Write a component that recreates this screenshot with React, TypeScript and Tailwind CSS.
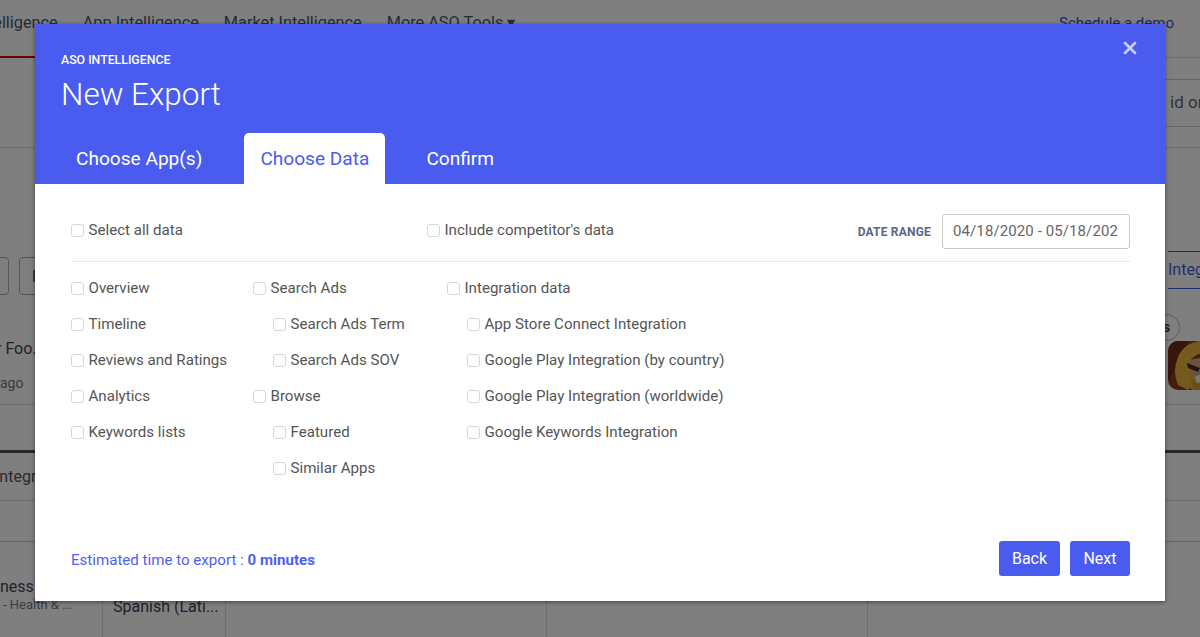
import { X } from "lucide-react";

const font = { fontFamily: "Roboto, sans-serif" };

function Check({ label, nested }: { label: string; nested?: boolean }) {
  return (
    <label className={`flex h-[36px] items-center whitespace-nowrap text-[15.1px] text-[#555] ${nested ? "pl-[20px]" : ""}`}>
      <span className="mr-[4.5px] h-[13px] w-[13px] shrink-0 rounded-[3px] border border-[#d6d6d6] bg-white" />
      {label}
    </label>
  );
}

function ClashIcon() {
  return (
    <svg viewBox="0 0 49 49" className="h-full w-full">
      <rect width="49" height="49" fill="#8a3a1e" />
      <path d="M0 0 H20 L6 30 L0 40 Z" fill="#6d2b18" />
      <path d="M14 24 Q26 14 49 18 L49 49 L24 49 Q14 40 14 24 Z" fill="#d8a184" />
      <path d="M10 44 Q4 30 10 16 Q16 2 32 0 L49 0 L49 14 Q30 8 22 20 Q22 32 30 40 L20 49 Z" fill="#e8b53a" />
      <path d="M19 22 L32 27 L30 31 L20 27 Z" fill="#4a2a1c" />
      <path d="M27 36 Q36 30 49 34 L49 42 Q36 40 29 42 Z" fill="#f3eee2" />
      <path d="M22 36 L32 44 L49 46 L49 49 L26 49 Z" fill="#d99f2e" />
    </svg>
  );
}

function BackgroundPage() {
  return (
    <div className="flex h-[637px] w-[1200px] flex-col overflow-hidden bg-white text-[16px] text-[#445]">
      <div className="flex h-[58px] shrink-0 border-b border-[#ddd]">
        <div className="flex h-[58px] flex-1 -translate-x-[61px] gap-[25px] pt-[11px] text-[16.3px] text-[#4a5a70]">
          <span className="h-[47px] border-b-2 border-[#d0021b]">ASO Intelligence</span>
          <span>App Intelligence</span>
          <span>Market Intelligence</span>
          <span>More ASO Tools ▾</span>
        </div>
        <span className="pr-[26px] pt-[12px] text-[15px] text-[#3f4fc0]">Schedule a demo</span>
      </div>
      <div className="flex h-[90px] shrink-0 items-center justify-end border-b border-[#ddd] text-[#666]">
        <div className="flex h-[48px] w-[60px] items-center overflow-hidden whitespace-nowrap border-y border-[#ccc] pl-[30px] text-[17px]">id or</div>
      </div>
      <div className="flex h-[257px] shrink-0 flex-col border-b border-[#ddd]">
        <div className="flex h-[147px] justify-between">
          <div className="flex gap-[10px] pt-[109px]">
            <div className="-ml-[10px] h-[38px] w-[19px] rounded border border-[#aaa]" />
            <div className="h-[38px] w-[40px] rounded border border-[#aaa] pl-[12px] pt-[7px]">F</div>
          </div>
          <div className="pt-[103px]">
            <div className="flex h-[38px] w-[32px] items-center overflow-hidden border-y border-[#4a5ae0] text-[#4a5ae0]">Integ</div>
          </div>
        </div>
        <div className="flex flex-1 justify-between">
          <div className="pt-[42px] leading-[24px]">
            <div className="-ml-[4px] whitespace-nowrap">r Foo.</div>
            <div className="pt-[10px] text-[14px] text-[#777]">ago</div>
          </div>
          <div className="w-[47px] overflow-hidden pt-[19px]">
            <div className="flex h-[27px] w-[27px] items-center justify-center rounded-full border border-[#bbb] text-[14px] font-bold">s</div>
            <div className="ml-[15px] h-[49px] w-[49px] overflow-hidden rounded-[10px]">
              <ClashIcon />
            </div>
          </div>
        </div>
      </div>
      <div className="flex h-[48px] shrink-0 border-b-[3px] border-[#555]" />
      <div className="flex h-[48px] shrink-0 items-center border-b border-[#ddd] text-[#555]">
        <span className="-ml-[5px]">Integr</span>
      </div>
      <div className="h-[41px] shrink-0 border-b border-[#c5cde0]" />
      <div className="flex flex-1">
        <div className="w-[103px] border-r border-[#ddd] pt-[35px]">
          <div className="leading-[20px]">ness</div>
          <div className="pl-[3px] text-[13px] leading-[16px] text-[#777]">- Health &amp; ...</div>
        </div>
        <div className="w-[123px] whitespace-nowrap border-r border-[#ddd] pl-[10px] pt-[53px] leading-[24px]">Spanish (Lati...</div>
        <div className="w-[321px] border-r border-[#ddd]" />
        <div className="w-[321px] border-r border-[#ddd]" />
      </div>
    </div>
  );
}

export default function App() {
  return (
    <div className="relative h-[637px] w-[1200px] overflow-hidden" style={font}>
      <BackgroundPage />

      <div className="absolute inset-0 bg-black/50" />

      <div className="absolute left-[35px] top-[24px] flex h-[577px] w-[1130px] flex-col bg-white shadow-[0_1px_4px_rgba(0,0,0,0.5)]">
        <div className="relative flex h-[160px] shrink-0 flex-col bg-[#4a5cf0] text-white">
          <div className="pl-[26px] pt-[29px] text-[12.3px] font-medium leading-[14px]">ASO INTELLIGENCE</div>
          <div className="pl-[26px] pt-[4px] text-[31.5px] font-light leading-[48px]">New Export</div>
          <button className="absolute right-[25px] top-[14px] text-[#c9cdfa]">
            <X size={20} strokeWidth={3.2} />
          </button>
          <div className="mt-auto flex gap-[25px] pl-[25px] text-[19.1px] leading-[51px]">
            <div className="px-[16px]">Choose App(s)</div>
            <div className="ml-[1px] rounded-t-[5px] bg-white px-[16px] text-[#4a5cf0]">Choose Data</div>
            <div className="px-[16px]">Confirm</div>
          </div>
        </div>

        <div className="flex flex-1 flex-col pl-[36px] pr-[35px]">
          <div className="flex h-[78px] shrink-0 items-start border-b border-[#e8e8e8] pt-[28px]">
            <div className="w-[356px]">
              <Check label="Select all data" />
            </div>
            <Check label="Include competitor's data" />
            <div className="ml-auto flex items-center pt-[2px]">
              <span className="mr-[11px] text-[12px] font-bold tracking-[0.2px] text-[#5b6785]">DATE RANGE</span>
              <div className="h-[35px] w-[188px] rounded-[3px] border border-[#ccc] px-[10px] text-[15px] leading-[33px] tracking-[0.1px] text-[#666]">
                <div className="w-[165px] overflow-hidden whitespace-nowrap">04/18/2020 - 05/18/2020</div>
              </div>
            </div>
          </div>

          <div className="flex pt-[8px]">
            <div className="w-[182px]">
              <Check label="Overview" />
              <Check label="Timeline" />
              <Check label="Reviews and Ratings" />
              <Check label="Analytics" />
              <Check label="Keywords lists" />
            </div>
            <div className="w-[194px]">
              <Check label="Search Ads" />
              <Check label="Search Ads Term" nested />
              <Check label="Search Ads SOV" nested />
              <Check label="Browse" />
              <Check label="Featured" nested />
              <Check label="Similar Apps" nested />
            </div>
            <div>
              <Check label="Integration data" />
              <Check label="App Store Connect Integration" nested />
              <Check label="Google Play Integration (by country)" nested />
              <Check label="Google Play Integration (worldwide)" nested />
              <Check label="Google Keywords Integration" nested />
            </div>
          </div>

          <div className="mt-auto flex items-center justify-between pb-[25px]">
            <div className="pt-[3px] text-[15.1px] text-[#4f60f2]">
              Estimated time to export : <span className="font-bold">0 minutes</span>
            </div>
            <div className="flex gap-[10px] text-[16px] text-white">
              <button className="h-[35px] w-[61px] rounded-[3px] bg-[#4a5cf0]">Back</button>
              <button className="h-[35px] w-[60px] rounded-[3px] bg-[#4a5cf0]">Next</button>
            </div>
          </div>
        </div>
      </div>
    </div>
  );
}
